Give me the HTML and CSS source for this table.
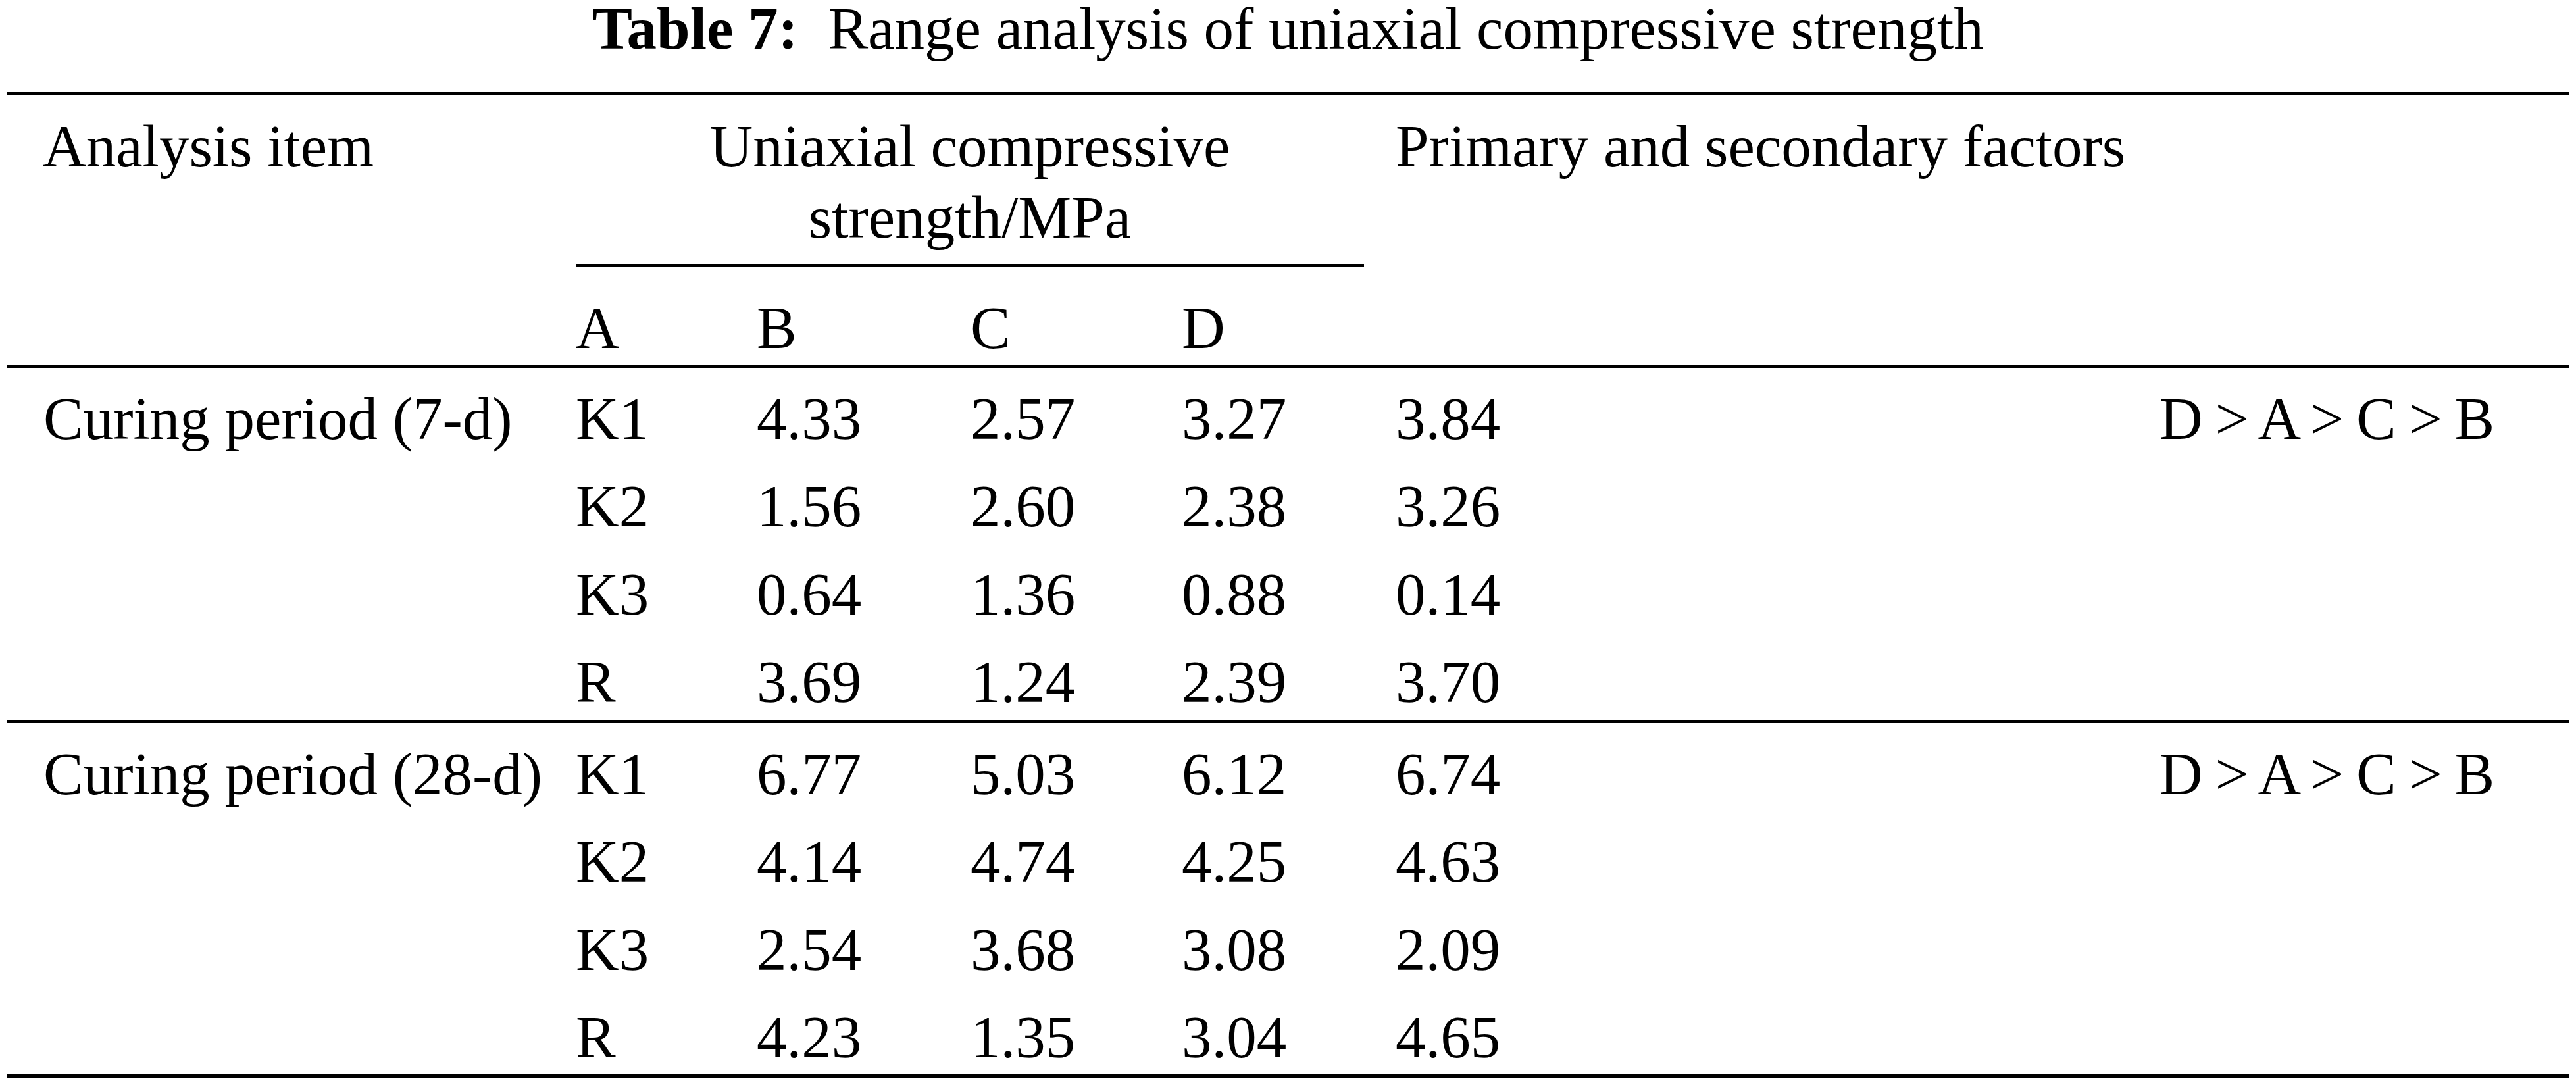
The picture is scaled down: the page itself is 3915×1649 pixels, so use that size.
FILE: index.html
```html
<!DOCTYPE html>
<html lang="en">
<head>
<meta charset="utf-8">
<title>Table 7: Range analysis of uniaxial compressive strength</title>
<link rel="stylesheet" href="styles.css">
</head>
<body>
<div class="page">
  <h1 class="caption"><b>Table 7:</b>&nbsp; Range analysis of uniaxial compressive strength</h1>
  <div class="table">
    <div class="thead grid">
      <div class="h-item">Analysis item</div>
      <div class="h-span">Uniaxial compressive<br>strength/MPa</div>
      <div class="h-factors">Primary and secondary factors</div>
      <div class="h-sub col2">A</div>
      <div class="h-sub col3">B</div>
      <div class="h-sub col4">C</div>
      <div class="h-sub col5">D</div>
    </div>

    <div class="group">
      <div class="row grid">
        <div class="label">Curing period (7-d)</div>
        <div class="k">K1</div><div>4.33</div><div>2.57</div><div>3.27</div><div>3.84</div>
        <div class="order">D &gt; A &gt; C &gt; B</div>
      </div>
      <div class="row grid">
        <div class="k">K2</div><div>1.56</div><div>2.60</div><div>2.38</div><div>3.26</div>
      </div>
      <div class="row grid">
        <div class="k">K3</div><div>0.64</div><div>1.36</div><div>0.88</div><div>0.14</div>
      </div>
      <div class="row grid">
        <div class="k">R</div><div>3.69</div><div>1.24</div><div>2.39</div><div>3.70</div>
      </div>
    </div>

    <div class="group last">
      <div class="row grid">
        <div class="label">Curing period (28-d)</div>
        <div class="k">K1</div><div>6.77</div><div>5.03</div><div>6.12</div><div>6.74</div>
        <div class="order">D &gt; A &gt; C &gt; B</div>
      </div>
      <div class="row grid">
        <div class="k">K2</div><div>4.14</div><div>4.74</div><div>4.25</div><div>4.63</div>
      </div>
      <div class="row grid">
        <div class="k">K3</div><div>2.54</div><div>3.68</div><div>3.08</div><div>2.09</div>
      </div>
      <div class="row grid">
        <div class="k">R</div><div>4.23</div><div>1.35</div><div>3.04</div><div>4.65</div>
      </div>
    </div>
  </div>
</div>
</body>
</html>
```

FILE: styles.css
```css
html, body {
  margin: 0;
  padding: 0;
  background: #fff;
}

body {
  font-family: "Liberation Serif", "Times New Roman", serif;
  font-size: 91px;
  color: #000;
}

.page {
  width: 3915px;
}

.caption {
  margin: 0 0 52px;
  font-size: 91px;
  font-weight: 400;
  line-height: 88px;
  text-align: center;
  white-space: nowrap;
}

.caption b {
  font-weight: 700;
}

.table {
  margin: 0 10px;
  border-top: 5px solid #000;
  line-height: 108px;
  white-space: nowrap;
}

.grid {
  display: grid;
  grid-template-columns: 865px 275px 325px 321px 325px 1161px 623px;
}

/* header */
.thead {
  border-bottom: 5px solid #000;
}

.h-item {
  grid-column: 1;
  grid-row: 1 / span 2;
  padding: 24px 0 0 55px;
}

.h-span {
  grid-column: 2 / span 4;
  grid-row: 1;
  margin-right: 48px;
  padding: 24px 0 16px;
  border-bottom: 5px solid #000;
  text-align: center;
}

.h-factors {
  grid-column: 6 / span 2;
  grid-row: 1 / span 2;
  padding-top: 24px;
}

.h-sub {
  grid-row: 2;
  padding: 39px 0 1px;
}

.col2 { grid-column: 2; }
.col3 { grid-column: 3; }
.col4 { grid-column: 4; }
.col5 { grid-column: 5; }

/* body groups */
.group {
  display: flex;
  flex-direction: column;
  gap: 25.5px;
  padding: 23.5px 0 3px;
  border-bottom: 5px solid #000;
}

.group.last {
  padding-bottom: 1.5px;
}

.row .label {
  grid-column: 1;
  padding-left: 56px;
}

.row .k {
  grid-column: 2;
}

.row .order {
  grid-column: 7;
  word-spacing: -4px;
}
```
